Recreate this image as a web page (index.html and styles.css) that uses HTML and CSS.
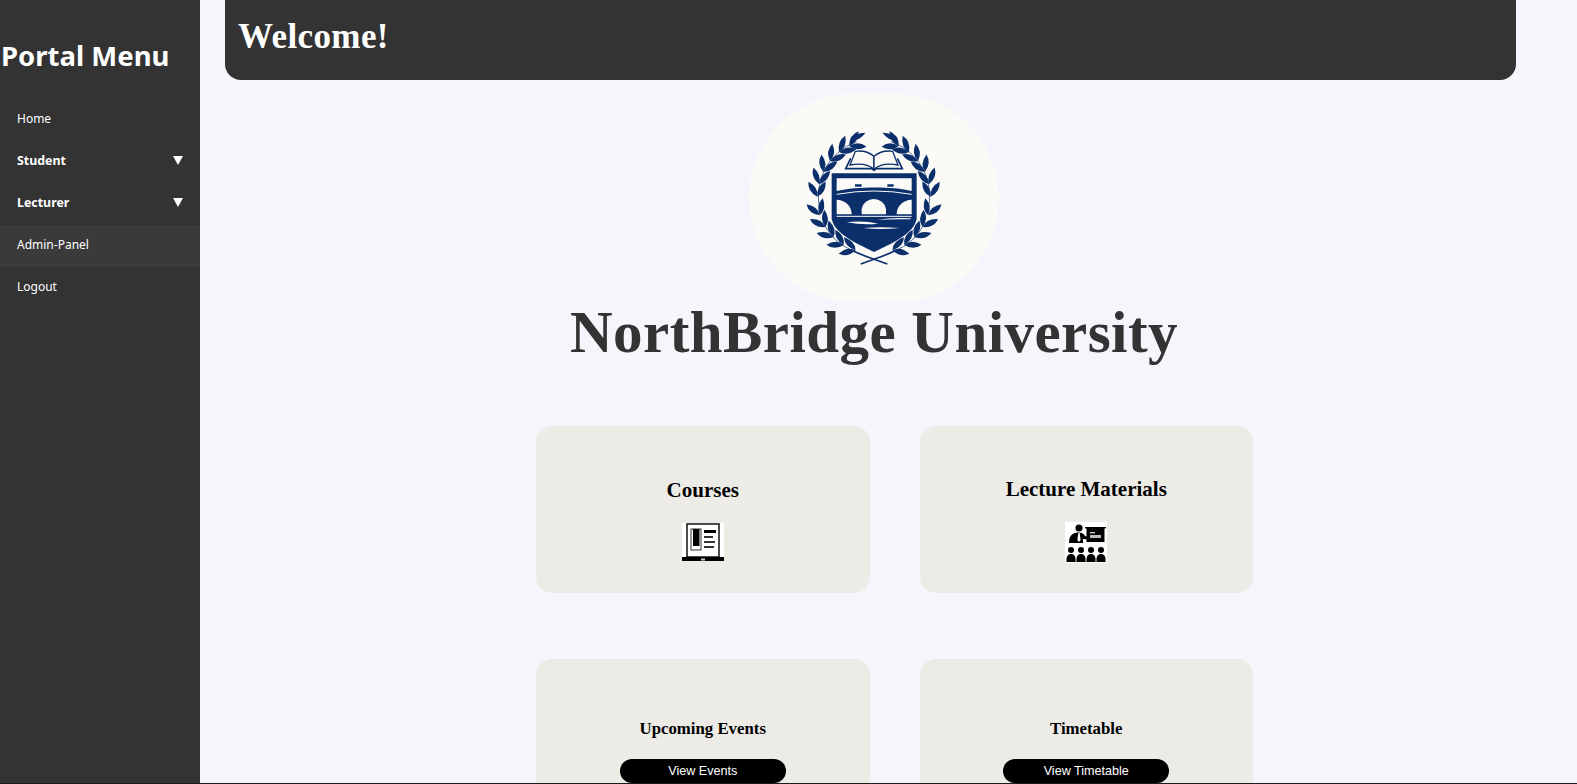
FILE: index.html
```html
<html>
    <head>
        <title>NorthBridge University Portal</title>
        <link rel="stylesheet" href="styles.css">
    </head>
    <body>
        <div class="sidebar">
            <h2 class="sidebar-title">Portal Menu</h2>
            <ul class="menu">
                <li><a href="#">Home</a></li>
                <li class="has-sub"><a href="#">Student</a><span class="arrow"></span></li>
                <li class="has-sub"><a href="#">Lecturer</a><span class="arrow"></span></li>
                <li class="active"><a href="#">Admin-Panel</a></li>
                <li><a href="#">Logout</a></li>
            </ul>
        </div>

        <div class="main">
            <div class="welcome">Welcome!</div>

            <div class="brand">
                <div class="logo">
                    <svg class="crest" viewBox="0 0 450 435" width="150" height="145">
                        <defs>
                            <g id="pair">
                                <path transform="rotate(29)" d="M0 0 Q-22 -18 -52 0 Q-28 18 0 0Z"/>
                                <path transform="rotate(-31)" d="M0 0 Q-22 -18 -52 0 Q-28 18 0 0Z"/>
                            </g>
                            <g id="branch">
                                <path class="stem" d="M262 417 L220 402 Q185 390 160 378"/>
                                <path class="stem thin" d="M160 378 A172 172 0 0 1 72 298"/>
                                <path class="stem thin" d="M62 262 A172 172 0 0 1 170 50"/>
                                <use href="#pair" transform="rotate(19 222 215) translate(222 385)"/>
                                <use href="#pair" transform="rotate(32 222 215) translate(222 386)"/>
                                <use href="#pair" transform="rotate(45 222 215) translate(222 387)"/>
                                <use href="#pair" transform="rotate(58 222 215) translate(222 387)"/>
                                <use href="#pair" transform="rotate(71 222 215) translate(222 387)"/>
                                <use href="#pair" transform="rotate(90 222 215) translate(222 385)"/>
                                <use href="#pair" transform="rotate(103 222 215) translate(222 385)"/>
                                <use href="#pair" transform="rotate(116 222 215) translate(222 385)"/>
                                <use href="#pair" transform="rotate(129 222 215) translate(222 385)"/>
                                <use href="#pair" transform="rotate(142 222 215) translate(222 385)"/>
                                <use href="#pair" transform="rotate(154 222 215) translate(222 385)"/>
                                <path transform="translate(150 46) rotate(-24)" d="M0 0 Q20 -15 52 -2 Q24 14 0 0Z"/>
                            </g>
                        </defs>
                        <use href="#branch"/>
                        <use href="#branch" transform="translate(444 0) scale(-1 1)"/>
                        <!-- book -->
                        <path class="book" d="M152 100 L137 131 H214 L222 136 L230 131 H307 L292 100"/>
                        <path class="page" d="M222 94 C205 80 185 76 166 79 L150 120 C180 114 205 118 222 133Z"/>
                        <path class="page" d="M222 94 C239 80 259 76 278 79 L294 120 C264 114 239 118 222 133Z"/>
                        <!-- shield -->
                        <path class="shield" d="M95 145 H350 V280 C345 320 290 350 222 381 C155 350 100 320 95 280Z"/>
                        <path class="cut" d="M110 160 H335 V198 C280 184 170 184 110 198Z"/>
                        <path class="shield" d="M165 185 V178 H185 V185Z M262 185 V178 H281 V185Z"/>
                        <path class="line" d="M110 208 Q222 188 335 208"/>
                        <path class="cut" d="M185 268 V252 A37 36 0 0 1 258 252 V268Z"/>
                        <path class="cut" d="M110 224 C135 225 155 242 155 268 H110Z"/>
                        <path class="cut" d="M335 224 C310 225 290 242 290 268 H335Z"/>
                        <path class="line" d="M110 274 H335"/>
                        <path class="cut" d="M140 292 Q190 286 235 296 Q190 301 140 292Z"/>
                        <path class="cut" d="M232 284 Q280 276 332 280 V283 Q285 282 232 284Z"/>
                        <path class="cut" d="M190 309 Q240 305 300 309 Q240 315 190 309Z"/>
                    </svg>
                </div>
                <h1 class="uni-name">NorthBridge University</h1>
            </div>

            <div class="cards">
                <div class="card">
                    <h3 class="card-title">Courses</h3>
                    <svg class="card-icon" viewBox="0 0 42 38" width="42" height="38">
                        <rect width="42" height="38" fill="#fff"/>
                        <rect x="5" y="1" width="32" height="33" fill="none" stroke="#000" stroke-width="1.4"/>
                        <rect x="0" y="34" width="42" height="4"/>
                        <rect x="19" y="35.5" width="4" height="2" fill="#ccc"/>
                        <rect x="9" y="6" width="10" height="21" fill="none" stroke="#333" stroke-width="1"/>
                        <rect x="11" y="6" width="6.5" height="17"/>
                        <rect x="22" y="7" width="12" height="3"/>
                        <rect x="22" y="13" width="9" height="2" fill="#333"/>
                        <rect x="22" y="18" width="11" height="2" fill="#333"/>
                        <rect x="22" y="23" width="10" height="2" fill="#333"/>
                    </svg>
                </div>
                <div class="card">
                    <h3 class="card-title">Lecture Materials</h3>
                    <svg class="card-icon" viewBox="0 0 42 41" width="42" height="41">
                        <rect width="42" height="41" fill="#fff"/>
                        <circle cx="14" cy="6" r="3.6"/>
                        <path d="M4 21 C4 13 8 10.5 14 10.5 C17 10.5 19 12 20 14 L23 15 V17.5 L18 17 V21Z"/>
                        <path d="M13.3 11 H14.7 L15.6 18 L14 20 L12.4 18Z" fill="#fff"/>
                        <rect x="20" y="5" width="21" height="1.4"/>
                        <rect x="21.5" y="6" width="18" height="14"/>
                        <rect x="25" y="10" width="5" height="1.4" fill="#ccc"/>
                        <rect x="25" y="13" width="11" height="3" fill="#bbb"/>
                        <g id="listener">
                            <circle cx="6" cy="28" r="3"/>
                            <path d="M1.5 40 C1 34 3 32 6 32 C9 32 11 34 10.5 40Z"/>
                        </g>
                        <use href="#listener" x="10"/>
                        <use href="#listener" x="20"/>
                        <use href="#listener" x="30"/>
                    </svg>
                </div>
                <div class="card card-small">
                    <h3 class="card-title small">Upcoming Events</h3>
                    <a class="btn" href="#">View Events</a>
                </div>
                <div class="card card-small">
                    <h3 class="card-title small">Timetable</h3>
                    <a class="btn" href="#">View Timetable</a>
                </div>
            </div>
        </div>
    </body>
</html>
```

FILE: styles.css
```css
html, body {
    padding: 0;
    margin: 0;
    height: 100%;
}
body {
    display: flex;
    box-sizing: border-box;
    border-bottom: 1px solid #1c1c1c;
    overflow: hidden;
    background-color: #f4f6fb;
}
.sidebar {
    width: 200px;
    flex-shrink: 0;
    background-color: #333;
    color: #fff;
    font-family: "Noto Sans", sans-serif;
}
.sidebar-title {
    margin: 0;
    padding: 37px 0 0 1px;
    height: 62px;
    font-size: 27.5px;
    line-height: 38px;
    font-weight: 700;
    white-space: nowrap;
}
.menu {
    list-style-type: none;
    margin: 0;
    padding: 0;
}
.menu li {
    display: flex;
    justify-content: space-between;
    align-items: center;
    height: 42px;
    padding: 0 17px 3px 17px;
    box-sizing: border-box;
}
.menu a {
    color: #fff;
    text-decoration: none;
    font-size: 12px;
}
.has-sub a {
    font-size: 12.4px;
    font-weight: 700;
}
.menu .active {
    background-color: #3a3a3a;
}
.arrow {
    width: 0;
    height: 0;
    border-left: 5px solid transparent;
    border-right: 5px solid transparent;
    border-top: 9px solid #fff;
}
.main {
    flex: 1;
    padding: 0 61px 0 25px;
    min-width: 0;
}
.welcome {
    height: 80px;
    box-sizing: border-box;
    padding: 18px 13px 0;
    background-color: #333;
    color: #fff;
    border-radius: 0 0 16px 16px;
    font-family: "Liberation Serif", serif;
    font-size: 35px;
    line-height: 38px;
    font-weight: 700;
    letter-spacing: 0.4px;
}
.brand {
    display: flex;
    flex-direction: column;
    align-items: center;
    padding: 14px 0 0 7px;
}
.logo {
    width: 250px;
    height: 208px;
    border-radius: 105px;
    background-color: #fbfaf7;
    display: flex;
    justify-content: center;
    padding-top: 31px;
    box-sizing: border-box;
}
.crest {
    fill: #0b2f6b;
    margin-left: 1px;
}
.stem {
    fill: none;
    stroke: #0b2f6b;
    stroke-width: 5;
}
.stem.thin {
    stroke-width: 2;
}
.book {
    fill: #fbfaf7;
    stroke: #0b2f6b;
    stroke-width: 5;
}
.page {
    fill: #fbfaf7;
    stroke: #0b2f6b;
    stroke-width: 4;
}
.shield {
    fill: #0b2f6b;
}
.cut {
    fill: #fbfaf7;
}
.line {
    fill: none;
    stroke: #fbfaf7;
    stroke-width: 3;
}
.uni-name {
    margin: 0;
    color: #333;
    font-family: "Liberation Serif", serif;
    font-size: 59px;
    line-height: 60px;
    font-weight: 700;
    letter-spacing: 0.45px;
    white-space: nowrap;
}
.cards {
    display: grid;
    grid-template-columns: 333.5px 333.5px;
    gap: 66px 50px;
    margin: 64px 0 0 311px;
}
.card {
    height: 167px;
    box-sizing: border-box;
    background-color: #ecebe6;
    border-radius: 16px;
    display: flex;
    flex-direction: column;
    align-items: center;
    justify-content: center;
    padding-top: 20px;
    font-family: "Liberation Serif", serif;
}
.card-title {
    margin: 0 0 21px;
    font-size: 21px;
    line-height: 24px;
    color: #000;
}
.card-icon {
    display: block;
}
.card-small {
    justify-content: flex-start;
    padding-top: 61px;
}
.card-title.small {
    font-size: 16.8px;
    line-height: 18px;
    margin-bottom: 21px;
}
.btn {
    display: block;
    flex-shrink: 0;
    width: 166px;
    height: 24px;
    line-height: 24px;
    border-radius: 12px;
    background-color: #000;
    color: #fff;
    text-align: center;
    text-decoration: none;
    font-family: "Liberation Sans", sans-serif;
    font-size: 12.6px;
}
```
